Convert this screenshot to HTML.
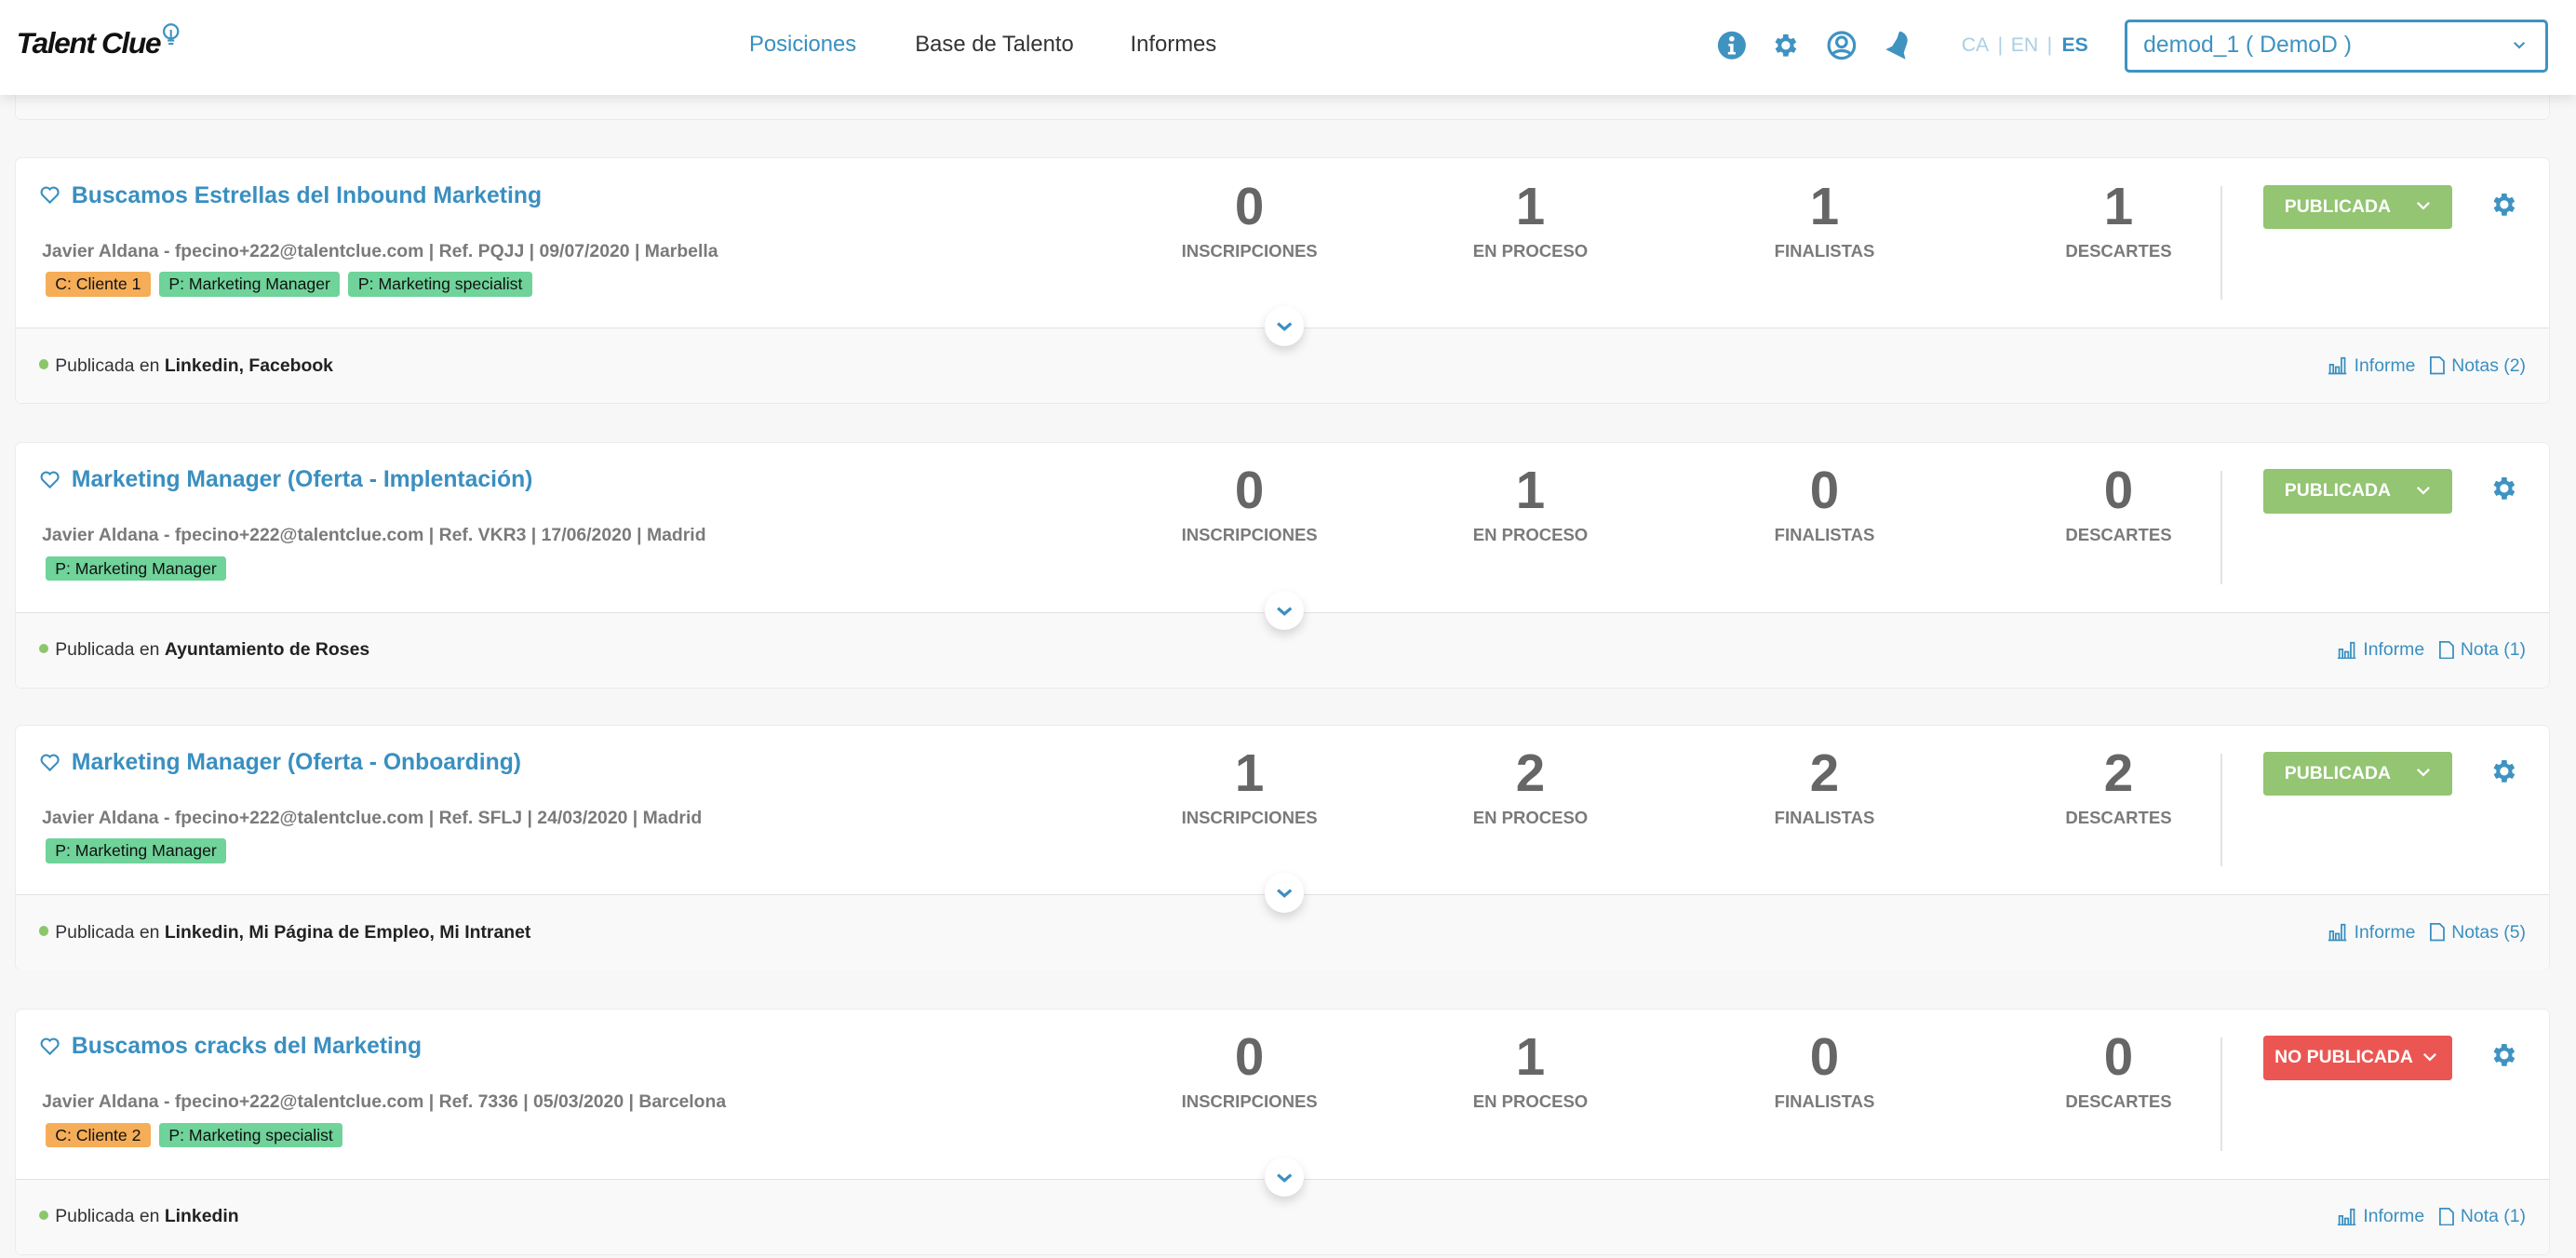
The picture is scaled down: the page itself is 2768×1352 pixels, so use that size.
<!DOCTYPE html>
<html><head><meta charset="utf-8">
<style>
*{box-sizing:border-box;margin:0;padding:0}
html,body{width:2768px;height:1352px;overflow:hidden;background:#f7f7f7}
#root{zoom:1.76531;width:1568px;height:766px;position:relative;font-family:"Liberation Sans",sans-serif;background:#f7f7f7;overflow:hidden}
.hdr{position:absolute;left:0;top:0;width:1568px;height:58px;background:#fff;box-shadow:0 2px 8px rgba(0,0,0,.12);z-index:5}
.logo{position:absolute;left:10px;top:14px;font-size:18px;font-weight:bold;font-style:italic;color:#111;letter-spacing:-0.8px}
.nav{position:absolute;top:19px;font-size:13.5px;color:#333}
.ic{position:absolute;top:18px}
.lang{position:absolute;top:21px;font-size:12px;color:#a9cfe4}
.sel{position:absolute;left:1293px;top:12px;width:258px;height:32px;border:2px solid #3f93c1;border-radius:3px;color:#3f93c1;font-size:14px;padding:6px 10px}
.card{position:absolute;left:9px;width:1543px;height:150px;border:1px solid #ebebeb;border-radius:4px;background:#fff}
.foot{position:absolute;left:0;top:103px;width:100%;height:46px;background:#f9f9f9;border-top:1px solid #e2e2e2;border-radius:0 0 4px 4px}
.title{position:absolute;left:34px;top:15px;font-size:14px;font-weight:bold;color:#3a8fc0}
.heart{position:absolute;left:15px;top:17px}
.meta{position:absolute;left:16px;top:50px;font-size:11px;font-weight:bold;color:#7a7a7a}
.tags{position:absolute;left:18px;top:69px;display:flex;gap:5px}
.tag{height:15px;font-size:10px;line-height:15px;padding:0 6px;border-radius:2px;color:#111}
.o{background:#f5ad58}.g{background:#6fd39a}
.st{position:absolute;width:140px;text-align:center;top:11px}
.st b{display:block;font-size:32px;line-height:36px;color:#666;font-weight:bold}
.st span{display:block;font-size:10.5px;font-weight:bold;color:#7a7a7a;margin-top:3px}
.div{position:absolute;left:1342px;top:17px;width:1px;height:69px;background:#e3e3e3}
.btn{position:absolute;left:1368px;top:16px;width:115px;height:27px;border-radius:2px;color:#fff;font-size:11px;font-weight:bold;line-height:27px;padding-left:13px}
.btn svg{position:absolute;right:13px;top:10px}
.pub{background:#93c572}.npub{background:#ec5652;padding-left:7px}
.gear{position:absolute;left:1506px;top:19px}
.chev{position:absolute;left:760px;top:90px;width:24px;height:24px;border-radius:50%;background:#fff;box-shadow:0 3px 6px rgba(0,0,0,.15);z-index:2}
.fl{position:absolute;left:14px;top:16px;font-size:11px;color:#333}
.fl .dot{display:inline-block;width:6px;height:6px;border-radius:50%;background:#8cc66b;margin-right:4px;vertical-align:1px}
.fl b{font-weight:bold;color:#222}
.fr{position:absolute;right:14px;top:16px;font-size:11px;color:#3a8fc0;display:flex;gap:9px;align-items:center}
.fr span{display:flex;align-items:center;gap:4px}
</style></head><body><div id="root">
<div class="hdr">
 <div class="logo">Talent Clue<svg width="11" height="14" viewBox="0 0 11 14" style="vertical-align:4px;margin-left:1px"><circle cx="5.5" cy="5" r="4.3" fill="none" stroke="#3f93c1" stroke-width="1.3"/><path d="M3.5 10.5h4M4 12.5h3M5.5 4v5" stroke="#3f93c1" stroke-width="1.2"/></svg></div>
 <div class="nav" style="left:456px;color:#3a8fc0">Posiciones</div>
 <div class="nav" style="left:557px">Base de Talento</div>
 <div class="nav" style="left:688px">Informes</div>
 <svg class="ic" style="left:1045px" width="18" height="19" viewBox="0 0 18 18"><circle cx="9" cy="9" r="8.5" fill="#3f93c1"/><circle cx="9" cy="5" r="1.6" fill="#fff"/><path d="M7 8h3v5h1.3v1.5H6.7V13H8V9.5H7z" fill="#fff"/></svg>
 <svg class="ic" style="left:1078px" width="18" height="19" viewBox="0 0 24 24"><path fill="#3f93c1" d="M19.4 13a7.5 7.5 0 000-2l2.1-1.6-2-3.5-2.5 1a7 7 0 00-1.7-1L15 3h-4l-.4 2.9a7 7 0 00-1.7 1l-2.5-1-2 3.5L6.6 11a7.5 7.5 0 000 2l-2.1 1.6 2 3.5 2.5-1a7 7 0 001.7 1L11 21h4l.4-2.9a7 7 0 001.7-1l2.5 1 2-3.5zM13 15.5a3.5 3.5 0 110-7 3.5 3.5 0 010 7z" transform="translate(-1 0)"/></svg>
 <svg class="ic" style="left:1112px" width="18" height="19" viewBox="0 0 18 18"><circle cx="9" cy="9" r="7.8" fill="none" stroke="#3f93c1" stroke-width="1.8"/><circle cx="9" cy="7" r="3" fill="none" stroke="#3f93c1" stroke-width="1.8"/><path d="M3.5 14.5c1.5-3 9.5-3 11 0" fill="none" stroke="#3f93c1" stroke-width="1.8"/></svg>
 <svg class="ic" style="left:1145px" width="18" height="20" viewBox="0 0 18 20"><path d="M12 1c3 1 5 4 4 7l-2 6 1 4-12-6 4-2 3-5c1-3 1-4 2-4z" fill="#3f93c1"/></svg>
 <div class="lang" style="left:1194px">CA</div>
 <div class="lang" style="left:1216px">|</div>
 <div class="lang" style="left:1224px">EN</div>
 <div class="lang" style="left:1246px">|</div>
 <div class="lang" style="left:1255px;color:#3a8fc0;font-weight:bold">ES</div>
 <div class="sel">demod_1 ( DemoD )<svg style="position:absolute;right:12px;top:11px" width="8" height="6" viewBox="0 0 8 6"><path d="M1 1l3 3 3-3" fill="none" stroke="#3f93c1" stroke-width="1.2"/></svg></div>
</div>
<div class="card" style="top:-80px;height:153px"><div class="foot" style="top:106px"></div></div>

<div class="card" style="top:96px">
 <svg class="heart" width="12" height="11" viewBox="0 0 12 11"><path d="M6 10L1.5 5.5A2.6 2.6 0 016 2a2.6 2.6 0 014.5 3.5z" fill="none" stroke="#3a8fc0" stroke-width="1.2"/></svg>
 <div class="title">Buscamos Estrellas del Inbound Marketing</div>
 <div class="meta">Javier Aldana - fpecino+222@talentclue.com | Ref. PQJJ | 09/07/2020 | Marbella</div>
 <div class="tags"><div class="tag o">C: Cliente 1</div><div class="tag g">P: Marketing Manager</div><div class="tag g">P: Marketing specialist</div></div>
 <div class="st" style="left:681px"><b>0</b><span>INSCRIPCIONES</span></div>
 <div class="st" style="left:852px"><b>1</b><span>EN PROCESO</span></div>
 <div class="st" style="left:1031px"><b>1</b><span>FINALISTAS</span></div>
 <div class="st" style="left:1210px"><b>1</b><span>DESCARTES</span></div>
 <div class="div"></div>
 <div class="btn pub">PUBLICADA<svg width="9" height="6" viewBox="0 0 9 6"><path d="M1 1l3.5 3.5L8 1" fill="none" stroke="#fff" stroke-width="1.3"/></svg></div>
 <svg class="gear" width="18" height="18" viewBox="0 0 24 24"><path fill="#3f93c1" d="M20.4 13a8 8 0 000-2l2.1-1.6-2-3.5-2.5 1a7 7 0 00-1.7-1L16 3h-4l-.4 2.9a7 7 0 00-1.7 1l-2.5-1-2 3.5L7.6 11a8 8 0 000 2l-2.1 1.6 2 3.5 2.5-1a7 7 0 001.7 1L12 21h4l.4-2.9a7 7 0 001.7-1l2.5 1 2-3.5zM14 15.5a3.5 3.5 0 110-7 3.5 3.5 0 010 7z" transform="translate(-2 0)"/></svg>
 <div class="chev"><svg width="24" height="24" viewBox="0 0 24 24"><path d="M8 10.5l4 3.5 4-3.5" fill="none" stroke="#3a8fc0" stroke-width="1.8"/></svg></div>
 <div class="foot"><div class="fl"><span class="dot"></span>Publicada en <b>Linkedin, Facebook</b></div>
 <div class="fr"><span><svg width="12" height="11" viewBox="0 0 12 11"><path d="M.5 10.5h11M1.5 10V5h2v5M5 10V6.5h2V10M8.5 10V1h2v9" fill="none" stroke="#3a8fc0"/></svg>Informe</span><span><svg width="9" height="11" viewBox="0 0 9 11"><path d="M.5.5h5.5l2.5 2.5v7.5H.5z" fill="none" stroke="#3a8fc0"/></svg>Notas (2)</span></div></div>
</div>

<div class="card" style="top:269px">
 <svg class="heart" width="12" height="11" viewBox="0 0 12 11"><path d="M6 10L1.5 5.5A2.6 2.6 0 016 2a2.6 2.6 0 014.5 3.5z" fill="none" stroke="#3a8fc0" stroke-width="1.2"/></svg>
 <div class="title">Marketing Manager (Oferta - Implentación)</div>
 <div class="meta">Javier Aldana - fpecino+222@talentclue.com | Ref. VKR3 | 17/06/2020 | Madrid</div>
 <div class="tags"><div class="tag g">P: Marketing Manager</div></div>
 <div class="st" style="left:681px"><b>0</b><span>INSCRIPCIONES</span></div>
 <div class="st" style="left:852px"><b>1</b><span>EN PROCESO</span></div>
 <div class="st" style="left:1031px"><b>0</b><span>FINALISTAS</span></div>
 <div class="st" style="left:1210px"><b>0</b><span>DESCARTES</span></div>
 <div class="div"></div>
 <div class="btn pub">PUBLICADA<svg width="9" height="6" viewBox="0 0 9 6"><path d="M1 1l3.5 3.5L8 1" fill="none" stroke="#fff" stroke-width="1.3"/></svg></div>
 <svg class="gear" width="18" height="18" viewBox="0 0 24 24"><path fill="#3f93c1" d="M20.4 13a8 8 0 000-2l2.1-1.6-2-3.5-2.5 1a7 7 0 00-1.7-1L16 3h-4l-.4 2.9a7 7 0 00-1.7 1l-2.5-1-2 3.5L7.6 11a8 8 0 000 2l-2.1 1.6 2 3.5 2.5-1a7 7 0 001.7 1L12 21h4l.4-2.9a7 7 0 001.7-1l2.5 1 2-3.5zM14 15.5a3.5 3.5 0 110-7 3.5 3.5 0 010 7z" transform="translate(-2 0)"/></svg>
 <div class="chev"><svg width="24" height="24" viewBox="0 0 24 24"><path d="M8 10.5l4 3.5 4-3.5" fill="none" stroke="#3a8fc0" stroke-width="1.8"/></svg></div>
 <div class="foot"><div class="fl"><span class="dot"></span>Publicada en <b>Ayuntamiento de Roses</b></div>
 <div class="fr"><span><svg width="12" height="11" viewBox="0 0 12 11"><path d="M.5 10.5h11M1.5 10V5h2v5M5 10V6.5h2V10M8.5 10V1h2v9" fill="none" stroke="#3a8fc0"/></svg>Informe</span><span><svg width="9" height="11" viewBox="0 0 9 11"><path d="M.5.5h5.5l2.5 2.5v7.5H.5z" fill="none" stroke="#3a8fc0"/></svg>Nota (1)</span></div></div>
</div>

<div class="card" style="top:441px">
 <svg class="heart" width="12" height="11" viewBox="0 0 12 11"><path d="M6 10L1.5 5.5A2.6 2.6 0 016 2a2.6 2.6 0 014.5 3.5z" fill="none" stroke="#3a8fc0" stroke-width="1.2"/></svg>
 <div class="title">Marketing Manager (Oferta - Onboarding)</div>
 <div class="meta">Javier Aldana - fpecino+222@talentclue.com | Ref. SFLJ | 24/03/2020 | Madrid</div>
 <div class="tags"><div class="tag g">P: Marketing Manager</div></div>
 <div class="st" style="left:681px"><b>1</b><span>INSCRIPCIONES</span></div>
 <div class="st" style="left:852px"><b>2</b><span>EN PROCESO</span></div>
 <div class="st" style="left:1031px"><b>2</b><span>FINALISTAS</span></div>
 <div class="st" style="left:1210px"><b>2</b><span>DESCARTES</span></div>
 <div class="div"></div>
 <div class="btn pub">PUBLICADA<svg width="9" height="6" viewBox="0 0 9 6"><path d="M1 1l3.5 3.5L8 1" fill="none" stroke="#fff" stroke-width="1.3"/></svg></div>
 <svg class="gear" width="18" height="18" viewBox="0 0 24 24"><path fill="#3f93c1" d="M20.4 13a8 8 0 000-2l2.1-1.6-2-3.5-2.5 1a7 7 0 00-1.7-1L16 3h-4l-.4 2.9a7 7 0 00-1.7 1l-2.5-1-2 3.5L7.6 11a8 8 0 000 2l-2.1 1.6 2 3.5 2.5-1a7 7 0 001.7 1L12 21h4l.4-2.9a7 7 0 001.7-1l2.5 1 2-3.5zM14 15.5a3.5 3.5 0 110-7 3.5 3.5 0 010 7z" transform="translate(-2 0)"/></svg>
 <div class="chev"><svg width="24" height="24" viewBox="0 0 24 24"><path d="M8 10.5l4 3.5 4-3.5" fill="none" stroke="#3a8fc0" stroke-width="1.8"/></svg></div>
 <div class="foot"><div class="fl"><span class="dot"></span>Publicada en <b>Linkedin, Mi Página de Empleo, Mi Intranet</b></div>
 <div class="fr"><span><svg width="12" height="11" viewBox="0 0 12 11"><path d="M.5 10.5h11M1.5 10V5h2v5M5 10V6.5h2V10M8.5 10V1h2v9" fill="none" stroke="#3a8fc0"/></svg>Informe</span><span><svg width="9" height="11" viewBox="0 0 9 11"><path d="M.5.5h5.5l2.5 2.5v7.5H.5z" fill="none" stroke="#3a8fc0"/></svg>Notas (5)</span></div></div>
</div>

<div class="card" style="top:614px">
 <svg class="heart" width="12" height="11" viewBox="0 0 12 11"><path d="M6 10L1.5 5.5A2.6 2.6 0 016 2a2.6 2.6 0 014.5 3.5z" fill="none" stroke="#3a8fc0" stroke-width="1.2"/></svg>
 <div class="title">Buscamos cracks del Marketing</div>
 <div class="meta">Javier Aldana - fpecino+222@talentclue.com | Ref. 7336 | 05/03/2020 | Barcelona</div>
 <div class="tags"><div class="tag o">C: Cliente 2</div><div class="tag g">P: Marketing specialist</div></div>
 <div class="st" style="left:681px"><b>0</b><span>INSCRIPCIONES</span></div>
 <div class="st" style="left:852px"><b>1</b><span>EN PROCESO</span></div>
 <div class="st" style="left:1031px"><b>0</b><span>FINALISTAS</span></div>
 <div class="st" style="left:1210px"><b>0</b><span>DESCARTES</span></div>
 <div class="div"></div>
 <div class="btn npub">NO PUBLICADA<svg style="right:9px" width="9" height="6" viewBox="0 0 9 6"><path d="M1 1l3.5 3.5L8 1" fill="none" stroke="#fff" stroke-width="1.3"/></svg></div>
 <svg class="gear" width="18" height="18" viewBox="0 0 24 24"><path fill="#3f93c1" d="M20.4 13a8 8 0 000-2l2.1-1.6-2-3.5-2.5 1a7 7 0 00-1.7-1L16 3h-4l-.4 2.9a7 7 0 00-1.7 1l-2.5-1-2 3.5L7.6 11a8 8 0 000 2l-2.1 1.6 2 3.5 2.5-1a7 7 0 001.7 1L12 21h4l.4-2.9a7 7 0 001.7-1l2.5 1 2-3.5zM14 15.5a3.5 3.5 0 110-7 3.5 3.5 0 010 7z" transform="translate(-2 0)"/></svg>
 <div class="chev"><svg width="24" height="24" viewBox="0 0 24 24"><path d="M8 10.5l4 3.5 4-3.5" fill="none" stroke="#3a8fc0" stroke-width="1.8"/></svg></div>
 <div class="foot"><div class="fl"><span class="dot"></span>Publicada en <b>Linkedin</b></div>
 <div class="fr"><span><svg width="12" height="11" viewBox="0 0 12 11"><path d="M.5 10.5h11M1.5 10V5h2v5M5 10V6.5h2V10M8.5 10V1h2v9" fill="none" stroke="#3a8fc0"/></svg>Informe</span><span><svg width="9" height="11" viewBox="0 0 9 11"><path d="M.5.5h5.5l2.5 2.5v7.5H.5z" fill="none" stroke="#3a8fc0"/></svg>Nota (1)</span></div></div>
</div>
</div></body></html>
